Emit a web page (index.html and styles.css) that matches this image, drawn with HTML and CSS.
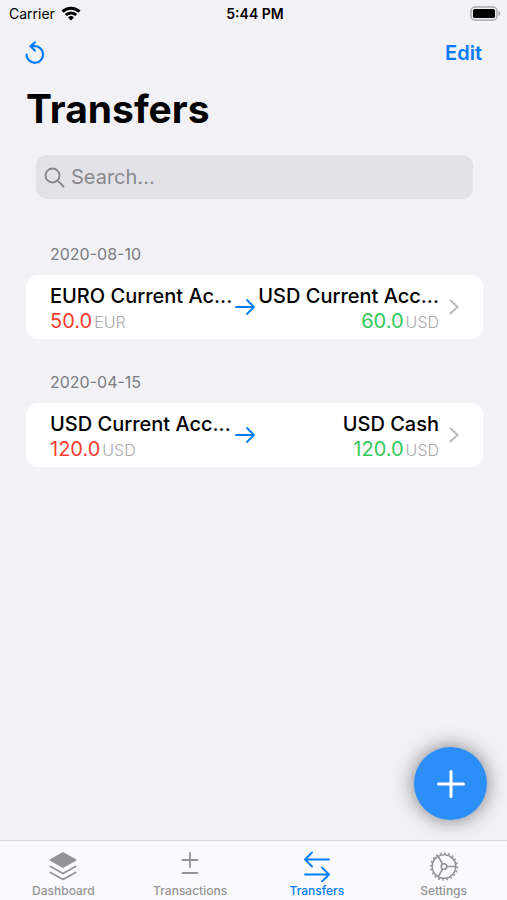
FILE: index.html
```
<!DOCTYPE html>
<html lang="en">
<head>
  <meta charset="UTF-8">
  <meta name="viewport" content="width=device-width, initial-scale=1.0">
  <title>Transfers</title>
  <link rel="stylesheet" href="styles.css">
</head>
<body>
  <div class="status-bar">
    <div class="carrier">
      <span>Carrier</span>
      <svg width="20" height="15" viewBox="0 0 20 15" fill="none" stroke="#000" stroke-width="3">
        <path d="M1.500 5.600a12.300 12.300 0 0 1 17 0"/>
        <path d="M4.700 9a7.700 7.700 0 0 1 10.600 0"/>
        <path d="M10 14.400l-3-3a4.300 4.300 0 0 1 6 0z" fill="#000" stroke="none"/>
      </svg>
    </div>
    <span class="time">5:44 PM</span>
    <svg class="battery" width="31" height="15" viewBox="0 0 31 15">
      <rect x="1" y="1" width="26" height="13" rx="4" fill="#f2f1f6" stroke="#aaa" stroke-width="1.500"/>
      <rect x="3" y="3" width="22" height="9" rx="1.500"/>
      <path d="M28.500 5v5c2.500-1 2.500-4 0-5z" fill="#aaa"/>
    </svg>
  </div>

  <header class="nav">
    <button class="nav-button" aria-label="Refresh">
      <svg width="20" height="24" viewBox="0 0 20 24" fill="none" stroke="#007aff" stroke-width="2.200" stroke-linecap="round" stroke-linejoin="round">
        <path d="M1.500 13.500a8.300 8.300 0 1 0 8.500-8.300H6"/>
        <path d="M9.800 1.500L5.500 5.300l4.300 4.200"/>
      </svg>
    </button>
    <button class="nav-button">Edit</button>
  </header>

  <main>
    <h1>Transfers</h1>

    <label class="search">
      <svg width="21" height="21" viewBox="0 0 21 21" fill="none" stroke="#85858b" stroke-width="1.800" stroke-linecap="round">
        <circle cx="8.500" cy="8.500" r="7"/>
        <path d="M13.700 13.700l5.800 5.800"/>
      </svg>
      <input type="text" placeholder="Search..." aria-label="Search">
    </label>

    <section>
      <h2>2020-08-10</h2>
      <a class="card" href="#">
        <div class="account">
          <div class="name">EURO Current Ac...</div>
          <div class="amount out">50.0 <small>EUR</small></div>
        </div>
        <svg class="arrow" width="20" height="18" viewBox="0 0 20 18">
          <path d="M1 9h18M12 2l7 7-7 7"/>
        </svg>
        <div class="account to">
          <div class="name">USD Current Acc...</div>
          <div class="amount in">60.0 <small>USD</small></div>
        </div>
        <svg class="chevron" width="10" height="16" viewBox="0 0 10 16">
          <path d="M1.500 1.500L8.500 8l-7 6.500"/>
        </svg>
      </a>
    </section>

    <section>
      <h2>2020-04-15</h2>
      <a class="card" href="#">
        <div class="account">
          <div class="name">USD Current Acc...</div>
          <div class="amount out">120.0 <small>USD</small></div>
        </div>
        <svg class="arrow" width="20" height="18" viewBox="0 0 20 18">
          <path d="M1 9h18M12 2l7 7-7 7"/>
        </svg>
        <div class="account to">
          <div class="name">USD Cash</div>
          <div class="amount in">120.0 <small>USD</small></div>
        </div>
        <svg class="chevron" width="10" height="16" viewBox="0 0 10 16">
          <path d="M1.500 1.500L8.500 8l-7 6.500"/>
        </svg>
      </a>
    </section>
  </main>

  <button class="add" aria-label="Add transfer">
    <svg width="30" height="30" viewBox="0 0 30 30" stroke="#fff" stroke-width="3" stroke-linecap="round">
      <path d="M15 2.500v25M2.500 15h25"/>
    </svg>
  </button>

  <nav class="tabs">
    <a href="#">
      <svg width="30" height="32" viewBox="0 0 30 32" fill="none" stroke="#949496" stroke-width="1.800" stroke-linecap="round" stroke-linejoin="round">
        <path d="M15 3L27.500 10 15 17 2.500 10z" fill="#949496"/>
        <path d="M2.500 16.500L15 23.500 27.500 16.500M2.500 22.500L15 29.500l12.500-7"/>
      </svg>
      Dashboard
    </a>
    <a href="#">
      <svg width="30" height="32" viewBox="0 0 30 32" stroke="#949496" stroke-width="1.800" stroke-linecap="round">
        <path d="M15 3v14M7.500 10h15M7.500 23h15"/>
      </svg>
      Transactions
    </a>
    <a class="active" href="#">
      <svg width="30" height="32" viewBox="0 0 30 32" fill="none" stroke="#007aff" stroke-width="1.800" stroke-linecap="round" stroke-linejoin="round">
        <path d="M27 9.500H3M10 2.500l-7 7 7 7M3 24.500h24M20 17.500l7 7-7 7"/>
      </svg>
      Transfers
    </a>
    <a href="#">
      <svg width="30" height="32" viewBox="0 0 30 32" fill="none" stroke="#949496" stroke-width="1.600">
        <circle cx="15" cy="16.500" r="11.800"/>
        <circle cx="15" cy="16.500" r="13.300" pathLength="80" stroke-dasharray="1.700 2.300"/>
        <circle cx="15" cy="16.500" r="2.800"/>
        <path d="M17.800 16.500h8.700M13.600 14L9.300 6.500M13.600 19l-4.300 7.500"/>
      </svg>
      Settings
    </a>
  </nav>
</body>
</html>
```
FILE: styles.css
```
* {
  box-sizing: border-box;
}
body {
  margin: 0;
  min-height: 100vh;
  display: flex;
  flex-direction: column;
  background: #f2f1f6;
  color: #000;
  font-family: Inter, "Liberation Sans", sans-serif;
}
button {
  border: 0;
  padding: 0;
  background: none;
  font-family: inherit;
  cursor: pointer;
}
a {
  color: inherit;
  text-decoration: none;
}
svg {
  flex-shrink: 0;
}
.status-bar {
  display: grid;
  grid-template-columns: 1fr auto 1fr;
  align-items: center;
  height: 27px;
  padding: 0 6px 0 9px;
  font-size: 14px;
}
.carrier {
  display: flex;
  align-items: center;
  gap: 6px;
}
.time {
  font-weight: 600;
}
.battery {
  justify-self: end;
}
.nav {
  display: flex;
  justify-content: space-between;
  align-items: center;
  height: 52px;
  padding: 0 25px;
}
.nav-button {
  display: flex;
  color: #007aff;
  font-size: 20px;
  font-weight: 600;
}
main {
  flex: 1;
  padding: 0 24px 0 26px;
}
h1 {
  margin: 6px 0 22px;
  font-size: 39px;
  line-height: 48px;
  font-weight: 700;
}
.search {
  display: flex;
  align-items: center;
  gap: 6px;
  height: 44px;
  margin: 0 10px 35px;
  padding: 0 8px;
  background: #e3e2e8;
  border-radius: 11px;
}
.search input {
  flex: 1;
  min-width: 0;
  padding: 0;
  border: 0;
  outline: 0;
  background: none;
  font-family: inherit;
  font-size: 20px;
}
.search input::placeholder {
  color: #88888e;
}
section {
  margin-bottom: 23px;
}
h2 {
  margin: 0;
  padding: 0 24px;
  color: #7c7c81;
  font-size: 16px;
  line-height: 41px;
  font-weight: 400;
}
.card {
  display: flex;
  align-items: center;
  height: 64px;
  padding: 0 24px;
  background: #fff;
  border-radius: 12px;
}
.account {
  flex: 1;
  min-width: 0;
  padding-top: 4px;
  line-height: 25px;
  white-space: nowrap;
}
.to {
  text-align: right;
}
.name {
  font-size: 20px;
  font-weight: 500;
}
.amount {
  display: flex;
  align-items: baseline;
  gap: 2px;
  font-size: 20px;
}
.to .amount {
  justify-content: flex-end;
}
.amount small {
  color: #aaa;
  font-size: 16px;
  font-weight: 300;
}
.out {
  color: #ff3b30;
}
.in {
  color: #34c759;
}
.arrow {
  fill: none;
  stroke: #007aff;
  stroke-width: 1.8;
  stroke-linecap: round;
  stroke-linejoin: round;
}
.chevron {
  margin-left: 10px;
  fill: none;
  stroke: #bbb;
  stroke-width: 2;
  stroke-linecap: round;
}
.add {
  position: fixed;
  right: 20px;
  bottom: 80px;
  display: flex;
  align-items: center;
  justify-content: center;
  width: 73px;
  height: 73px;
  border-radius: 50%;
  background: #2b8ef9;
  box-shadow: 0 0 20px rgba(0, 0, 0, 0.5);
}
.tabs {
  position: sticky;
  bottom: 0;
  display: grid;
  grid-template-columns: repeat(4, 1fr);
  height: 60px;
  padding-top: 9px;
  border-top: 1px solid #d8d8dc;
  background: #fafafc;
  color: #949496;
  font-size: 12px;
  line-height: 18px;
  font-weight: 500;
}
.tabs a {
  display: flex;
  flex-direction: column;
  align-items: center;
}
.tabs .active {
  color: #007aff;
}
```
